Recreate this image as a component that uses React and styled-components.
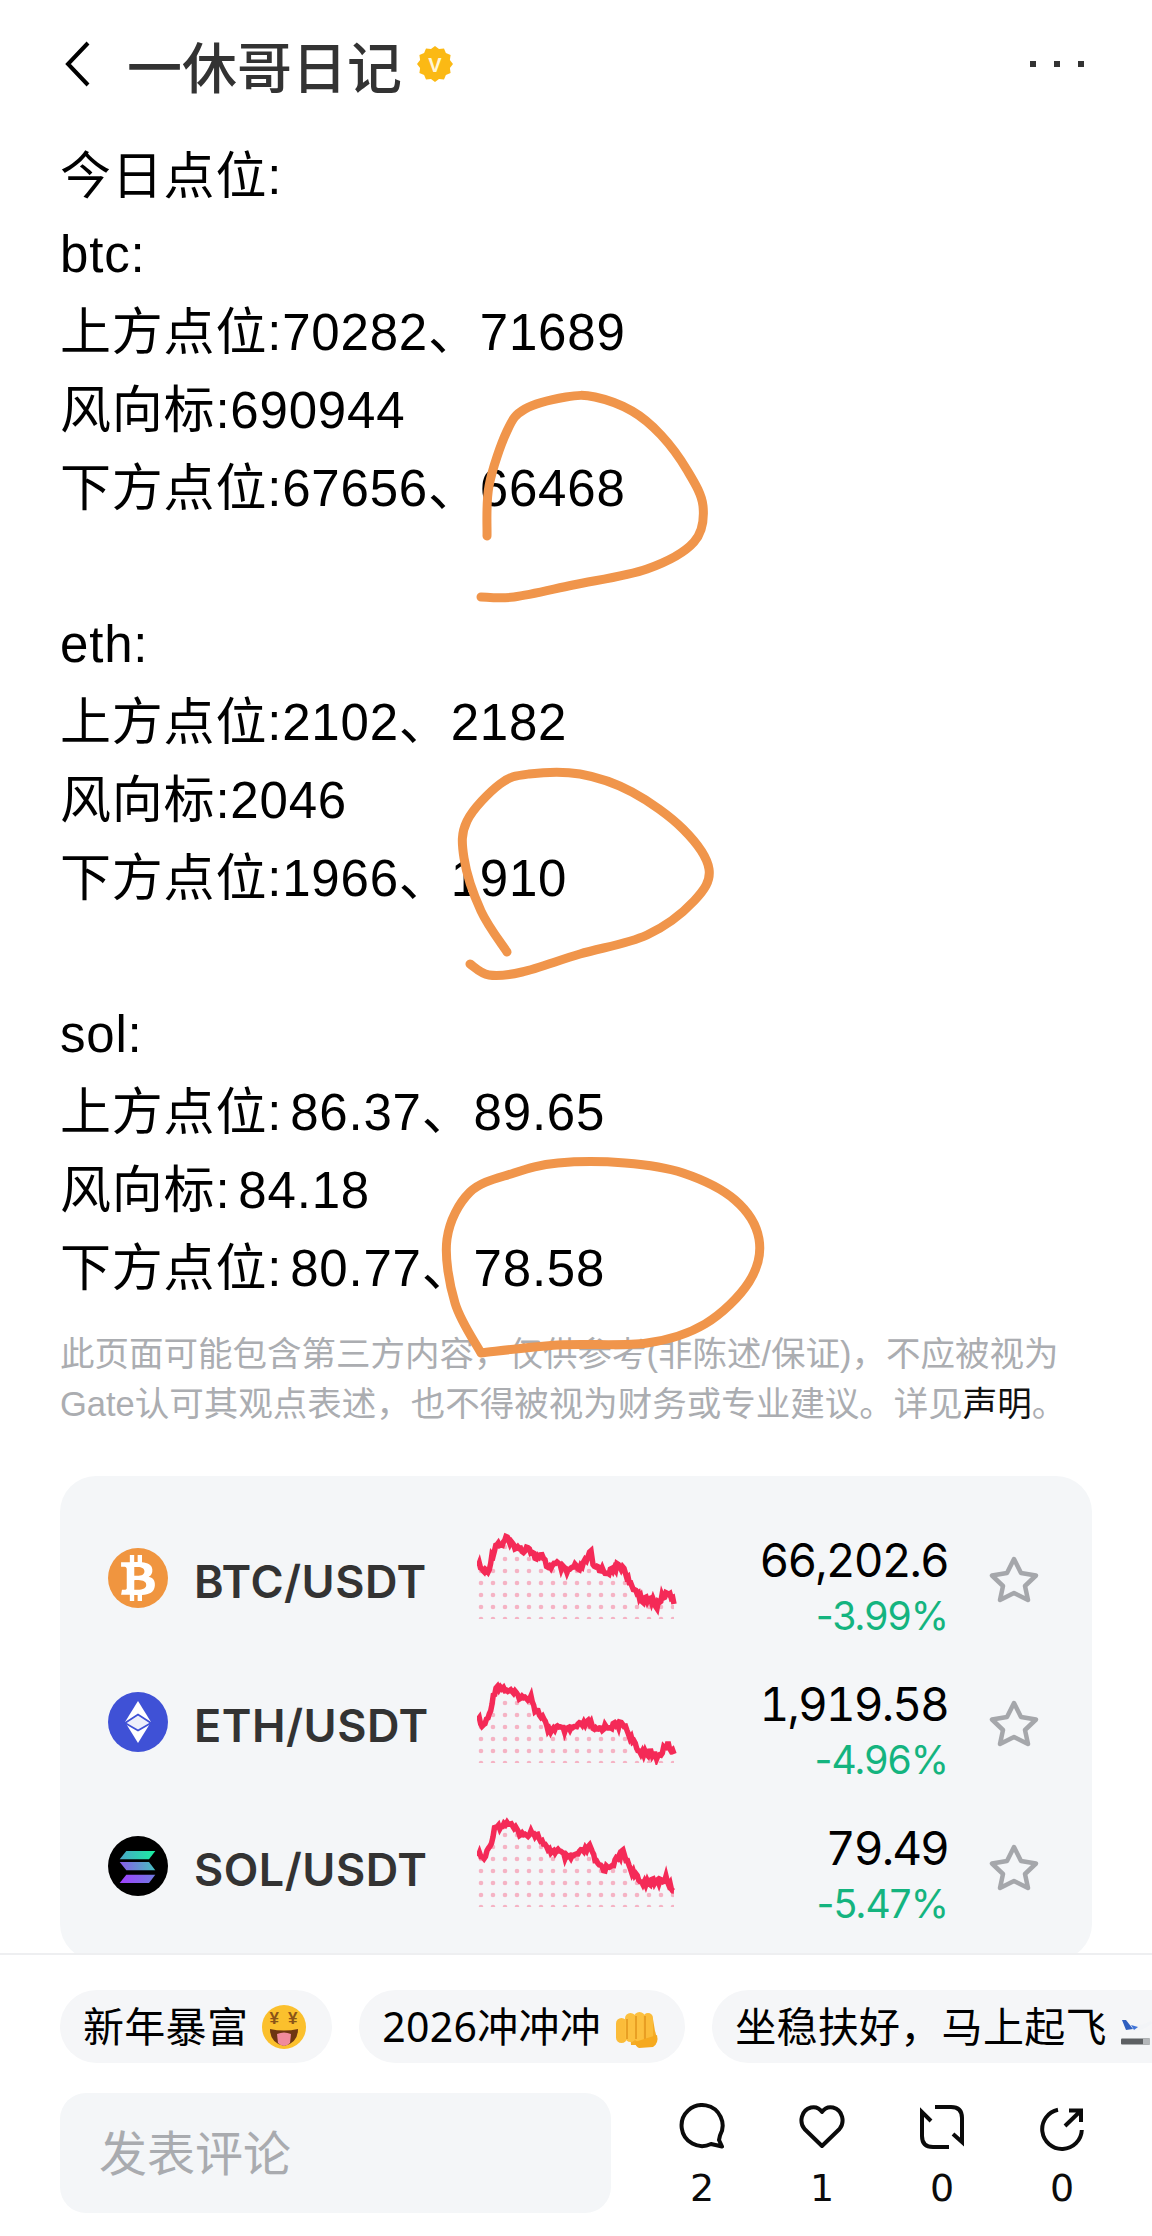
import React, { useId } from "react";
import styled, { createGlobalStyle } from "styled-components";
import { FaBtc } from "react-icons/fa";

const sans = `"Liberation Sans", "Noto Sans CJK SC", sans-serif`;

const GlobalStyle = createGlobalStyle`
	html, body {
		margin: 0;
		padding: 0;
		background: #fff;
	}
	* {
		box-sizing: border-box;
	}
`;

const Page = styled.div`
	position: relative;
	display: flex;
	flex-direction: column;
	width: 1152px;
	height: 2236px;
	overflow: hidden;
	font-family: ${sans};
	color: #000;
`;

const Content = styled.main`
	flex: 1;
	min-height: 0;
	overflow: hidden;
`;

const Header = styled.header`
	display: flex;
	align-items: center;
	height: 128px;
	padding: 0 68px 0 64px;
`;

const BackIcon = styled.svg`
	width: 28px;
	height: 46px;
	margin-right: 35px;
`;

const Title = styled.h1`
	margin: 0 15px 0 0;
	font-family: "Noto Sans CJK SC", sans-serif;
	font-size: 55px;
	font-weight: 500;
	line-height: 1;
	color: #333;
`;

const Badge = styled.svg`
	width: 36px;
	height: 36px;
`;

const MoreButton = styled.div`
	display: flex;
	gap: 18px;
	margin-left: auto;
`;

const MoreDot = styled.span`
	width: 6px;
	height: 6px;
	background: #333;
`;

const Article = styled.article`
	padding: 10px 60px 0;
	font-size: 51px;
	line-height: 78px;
	letter-spacing: 0.8px;
	word-spacing: -7px;
`;

const Line = styled.div`
	min-height: 78px;
	white-space: pre;
`;

const Disclaimer = styled.p`
	margin: 21px 0 0;
	padding: 0 60px 0 60px;
	font-size: 34.5px;
	line-height: 50px;
	color: #abadb1;
`;

const DisclaimerLink = styled.span`
	color: #111;
`;

const Card = styled.section`
	margin: 47px 60px 0;
	height: 484px;
	padding: 30px 0 0 48px;
	border-radius: 36px;
	background: #f4f6f8;
`;

const Row = styled.div`
	display: grid;
	grid-template-columns: 86px 283px 200px 271px 91px;
	align-items: center;
	height: 144px;
`;

const CoinCircle = styled.div`
	display: flex;
	align-items: center;
	justify-content: center;
	width: 60px;
	height: 60px;
	border-radius: 50%;
	background: ${(p) => p.$bg};
	color: #fff;
	font-size: 46px;
`;

const Pair = styled.div`
	padding-top: 6px;
	font-family: Inter, sans-serif;
	font-size: 45px;
	font-weight: 600;
	letter-spacing: 0.5px;
	color: #333;
`;

const Spark = styled.svg`
	display: block;
	width: 200px;
	height: 92px;
	margin-top: -6px;
`;

const Quote = styled.div`
	display: flex;
	flex-direction: column;
	align-items: flex-end;
	padding-top: 20px;
	font-family: Inter, sans-serif;
`;

const Price = styled.div`
	font-size: 46px;
	line-height: 56px;
	font-feature-settings: "tnum";
	letter-spacing: -1.9px;
	color: #000;
`;

const Change = styled.div`
	font-size: 39px;
	line-height: 56px;
	letter-spacing: -1px;
	color: #14b47f;
`;

const StarIcon = styled.svg`
	justify-self: end;
	width: 50px;
	height: 50px;
	margin-top: 4px;
`;

const Footer = styled.footer`
	flex-shrink: 0;
	height: 283px;
	padding-top: 35px;
	border-top: 2px solid #eeeff1;
	background: #fff;
`;

const ChipRow = styled.div`
	display: flex;
	gap: 27px;
	padding-left: 60px;
	overflow: hidden;
`;

const Chip = styled.div`
	display: flex;
	flex-shrink: 0;
	align-items: center;
	gap: 14px;
	height: 73px;
	padding: 0 26px 0 23px;
	border-radius: 37px;
	background: #f5f6f8;
	font-size: 41px;
	letter-spacing: 0.3px;
	white-space: nowrap;
`;

const ChipText = styled.span`
	margin-top: -5px;
`;

const ChipDigits = styled.span`
	font-family: "Noto Sans", sans-serif;
`;

const Emoji = styled.svg`
	flex-shrink: 0;
	width: 44px;
	height: 44px;
`;

const ActionRow = styled.div`
	display: flex;
	margin-top: 30px;
	padding-left: 60px;
`;

const CommentInput = styled.div`
	display: flex;
	align-items: center;
	width: 551px;
	height: 120px;
	padding: 0 0 6px 39px;
	border-radius: 26px;
	background: #f4f6f8;
	font-size: 48px;
	color: #a9abaf;
`;

const Actions = styled.div`
	display: flex;
	margin-left: 31px;
	padding-top: 10px;
`;

const Action = styled.div`
	display: flex;
	flex-direction: column;
	align-items: center;
	width: 120px;
`;

const ActionIcon = styled.svg`
	width: 48px;
	height: 48px;
	fill: none;
	stroke: #0b0b0b;
	stroke-width: 4;
`;

const ActionCount = styled.div`
	margin-top: 15px;
	font-family: "DejaVu Sans", sans-serif;
	font-size: 38px;
	line-height: 44px;
	color: #0b0b0b;
`;

const Scribbles = styled.svg`
	position: absolute;
	top: 0;
	left: 0;
	width: 1152px;
	height: 2236px;
	fill: none;
	stroke: #f0954b;
	stroke-width: 9;
	stroke-linecap: round;
	stroke-linejoin: round;
	pointer-events: none;
`;

const lines = [
	"今日点位:",
	"btc:",
	"上方点位:70282、71689",
	"风向标:690944",
	"下方点位:67656、66468",
	"",
	"eth:",
	"上方点位:2102、2182",
	"风向标:2046",
	"下方点位:1966、1910",
	"",
	"sol:",
	"上方点位: 86.37、89.65",
	"风向标: 84.18",
	"下方点位: 80.77、78.58",
];

const circles = [
	[
		[487, 536], [489, 486], [507, 431], [525, 409], [566, 397], [595, 397], [632, 411], [661, 435],
		[687, 470], [703, 506], [694, 542], [647, 569], [573, 585], [514, 597], [481, 597],
	],
	[
		[507, 952], [481, 911], [464, 858], [467, 821], [500, 784], [529, 774], [580, 774], [632, 792],
		[683, 829], [709, 869], [694, 901], [647, 935], [580, 954], [522, 972], [489, 975], [470, 964],
	],
	[
		[481, 1353], [455, 1303], [447, 1239], [470, 1192], [514, 1173], [558, 1163], [625, 1163], [683, 1173],
		[735, 1200], [759, 1239], [749, 1282], [705, 1324], [647, 1343], [558, 1345], [481, 1353],
	],
];

const coins = [
	{
		pair: "BTC/USDT",
		price: "66,202.6",
		change: "-3.99%",
		bg: "#f0953f",
		spark: [
			[1, 35], [6, 42], [11, 43], [15, 27], [20, 13], [24, 17], [29, 8], [33, 15], [38, 17], [45, 22], [51, 17],
			[58, 28], [65, 28], [71, 38], [80, 35], [90, 43], [98, 37], [101, 42], [108, 33], [114, 23], [116, 38],
			[121, 38], [128, 43], [136, 42], [140, 37], [147, 39], [155, 60], [160, 62], [165, 71], [176, 71],
			[180, 78], [185, 68], [193, 63], [197, 75],
		],
	},
	{
		pair: "ETH/USDT",
		price: "1,919.58",
		change: "-4.96%",
		bg: "#3f51d6",
		spark: [
			[1, 44], [5, 54], [11, 46], [19, 13], [28, 16], [38, 21], [48, 26], [54, 23], [58, 36], [67, 46], [71, 59],
			[79, 54], [89, 58], [101, 53], [114, 49], [116, 58], [128, 54], [147, 51], [153, 63], [161, 78], [171, 80],
			[181, 84], [191, 71], [197, 81],
		],
	},
	{
		pair: "SOL/USDT",
		price: "79.49",
		change: "-5.47%",
		bg: "#000",
		spark: [
			[1, 37], [7, 42], [13, 29], [19, 7], [24, 10], [30, 5], [40, 14], [48, 19], [54, 14], [62, 20], [71, 34],
			[81, 34], [91, 42], [101, 37], [114, 30], [118, 45], [128, 52], [138, 45], [146, 35], [155, 54], [163, 65],
			[179, 65], [189, 62], [197, 74],
		],
	},
];

// catmull-rom through the points, so the hand drawn rings stay round
const smoothPath = (pts) => {
	let d = `M${pts[0][0]} ${pts[0][1]}`;
	for (let i = 0; i < pts.length - 1; i++) {
		const p0 = pts[i - 1] || pts[i];
		const p1 = pts[i];
		const p2 = pts[i + 1];
		const p3 = pts[i + 2] || p2;
		const c1x = p1[0] + (p2[0] - p0[0]) / 6;
		const c1y = p1[1] + (p2[1] - p0[1]) / 6;
		const c2x = p2[0] - (p3[0] - p1[0]) / 6;
		const c2y = p2[1] - (p3[1] - p1[1]) / 6;
		d += ` C${c1x} ${c1y} ${c2x} ${c2y} ${p2[0]} ${p2[1]}`;
	}
	return d;
};

// adds fixed noise between the points so the line looks like tick data
const jitter = (pts) => {
	const out = [];
	let n = 0;
	pts.slice(0, -1).forEach((p, i) => {
		const q = pts[i + 1];
		const steps = Math.max(1, Math.round((q[0] - p[0]) / 1.4));
		for (let s = 0; s < steps; s++) {
			const t = s / steps;
			const r = Math.sin(++n * 12.9898) * 43758.5453;
			const noise = (r - Math.floor(r) - 0.5) * 6;
			out.push([p[0] + (q[0] - p[0]) * t, p[1] + (q[1] - p[1]) * t + noise]);
		}
	});
	out.push(pts[pts.length - 1]);
	return out;
};

const toPoints = (pts) => pts.map((p) => `${p[0].toFixed(1)},${p[1].toFixed(1)}`).join(" ");

const Sparkline = ({ points }) => {
	const id = useId();
	const noisy = jitter(points);
	const last = points[points.length - 1];
	const area = `${toPoints(points)} ${last[0]},92 ${points[0][0]},92`;
	return (
		<Spark viewBox="0 0 200 92">
			<defs>
				<pattern id={`${id}d`} x="-2" y="0" width="12" height="12" patternUnits="userSpaceOnUse">
					<circle cx="6" cy="6" r="2.3" fill="#f5b3c4" />
				</pattern>
				<clipPath id={`${id}c`}>
					<polygon points={area} />
				</clipPath>
			</defs>
			<rect width="200" height="90" fill={`url(#${id}d)`} clipPath={`url(#${id}c)`} />
			<polyline
				points={toPoints(noisy)}
				fill="none"
				stroke="#f42a57"
				strokeWidth="5.5"
				strokeLinejoin="miter"
			/>
		</Spark>
	);
};

const starBurst = (() => {
	const pts = [];
	for (let i = 0; i < 24; i++) {
		const r = i % 2 ? 15.4 : 18;
		const a = (i * Math.PI) / 12;
		pts.push(`${(18 + r * Math.sin(a)).toFixed(2)},${(18 - r * Math.cos(a)).toFixed(2)}`);
	}
	return pts.join(" ");
})();

const EthLogo = () => (
	<svg width="60" height="60" viewBox="0 0 60 60">
		<polygon points="30,9 43,30 30,51 17,30" fill="#fff" />
		<polygon points="17,31 30,22.5 43,31 30,38.5" fill="#eef0fb" stroke="#3f51d6" strokeWidth="1.8" />
	</svg>
);

const SolLogo = () => {
	const id = useId();
	return (
		<svg width="60" height="60" viewBox="0 0 60 60">
			<defs>
				<linearGradient id={`${id}a`} x1="0" y1="0" x2="1" y2="0">
					<stop offset="0" stopColor="#4aa5c8" />
					<stop offset="1" stopColor="#19f0a0" />
				</linearGradient>
				<linearGradient id={`${id}b`} x1="0" y1="0" x2="1" y2="0">
					<stop offset="0" stopColor="#8a5be8" />
					<stop offset="1" stopColor="#45c0c0" />
				</linearGradient>
				<linearGradient id={`${id}c`} x1="0" y1="0" x2="1" y2="0">
					<stop offset="0" stopColor="#a040ff" />
					<stop offset="1" stopColor="#6f7be0" />
				</linearGradient>
			</defs>
			<polygon points="18.3,15 47.3,15 41,23.3 11.7,23.3" fill={`url(#${id}a)`} />
			<polygon points="11.7,26 41,26 47.3,34.3 18.3,34.3" fill={`url(#${id}b)`} />
			<polygon points="18.3,38.7 47.3,38.7 41,47 11.7,47" fill={`url(#${id}c)`} />
		</svg>
	);
};

const coinLogos = {
	"BTC/USDT": <FaBtc />,
	"ETH/USDT": <EthLogo />,
	"SOL/USDT": <SolLogo />,
};

const MoneyFace = () => (
	<Emoji viewBox="0 0 44 44">
		<circle cx="22" cy="22" r="22" fill="#fbc02d" />
		<text x="12.5" y="19" fontSize="17" fontWeight="700" textAnchor="middle" fill="#8a5418" fontFamily="Liberation Sans">¥</text>
		<text x="31" y="19" fontSize="17" fontWeight="700" textAnchor="middle" fill="#8a5418" fontFamily="Liberation Sans">¥</text>
		<path d="M8 24 Q22 27 36 24 Q36 38 22 41 Q8 38 8 24Z" fill="#6d3512" />
		<path d="M15 29 Q22 26 29 29 L28 38 Q22 44 16 38Z" fill="#f08a9c" />
	</Emoji>
);

const Fist = () => (
	<Emoji viewBox="0 0 44 44">
		<path d="M16 40 L40 40 Q43 34 40 26 L38 14 L14 14 Z" fill="#f5ac26" />
		<rect x="1" y="13" width="11" height="25" rx="5.5" fill="#fbbc3a" />
		<rect x="10" y="8" width="11" height="29" rx="5.5" fill="#fcc03f" />
		<rect x="19" y="7" width="11" height="30" rx="5.5" fill="#fcc03f" />
		<rect x="28" y="8" width="10" height="30" rx="5" fill="#fbbc3a" />
		<path d="M12 14 V34 M21 11 V34 M30 11 V34" stroke="#e0921a" strokeWidth="1.4" fill="none" />
		<path d="M20 37 Q32 33 42 30 Q44 38 38 42 L24 43 Q20 41 20 37Z" fill="#f5a91f" />
	</Emoji>
);

const Plane = () => (
	<Emoji viewBox="0 0 44 44">
		<path d="M6 20 Q18 22 30 16 L31 18.5 Q24 25 12 26 Z" fill="#f2f4f7" />
		<path d="M1 15 L5 15 L12 24 L5 25 Z" fill="#2f5fc0" />
		<path d="M10 20 L17 22 L13 25 Z" fill="#3f74d8" />
		<rect x="0" y="33.5" width="29" height="6" rx="1" fill="#5d6063" />
		<rect x="22" y="33.5" width="7" height="6" fill="#b4b7ba" />
	</Emoji>
);

const App = () => (
	<Page>
		<GlobalStyle />
		<Content>
			<Header>
				<BackIcon viewBox="0 0 28 46">
					<path d="M24 2 L4 23 L24 44" fill="none" stroke="#000" strokeWidth="4" />
				</BackIcon>
				<Title>一休哥日记</Title>
				<Badge viewBox="0 0 36 36">
					<polygon points={starBurst} fill="#fbb914" />
					<text x="18" y="25.5" fontSize="20" fontWeight="700" textAnchor="middle" fill="#fff6d8" fontFamily="Liberation Sans">
						V
					</text>
				</Badge>
				<MoreButton>
					<MoreDot />
					<MoreDot />
					<MoreDot />
				</MoreButton>
			</Header>

			<Article>
				{lines.map((text, i) => (
					<Line key={i}>{text}</Line>
				))}
			</Article>

			<Disclaimer>
				此页面可能包含第三方内容，仅供参考(非陈述/保证)，不应被视为Gate认可其观点表述，也不得被视为财务或专业建议。详见
				<DisclaimerLink>声明</DisclaimerLink>。
			</Disclaimer>

			<Card>
				{coins.map((coin) => (
					<Row key={coin.pair}>
						<CoinCircle $bg={coin.bg}>{coinLogos[coin.pair]}</CoinCircle>
						<Pair>{coin.pair}</Pair>
						<Sparkline points={coin.spark} />
						<Quote>
							<Price>{coin.price}</Price>
							<Change>{coin.change}</Change>
						</Quote>
						<StarIcon viewBox="0 0 50 50">
							<polygon
								points="25,4 32,18 47,20.5 36,31 39,45 25,38 11,45 14,31 3,20.5 18,18"
								fill="none"
								stroke="#a5a7ab"
								strokeWidth="4.5"
								strokeLinejoin="round"
							/>
						</StarIcon>
					</Row>
				))}
			</Card>
		</Content>

		<Footer>
			<ChipRow>
				<Chip>
					<ChipText>新年暴富</ChipText>
					<MoneyFace />
				</Chip>
				<Chip>
					<ChipText>
						<ChipDigits>2026</ChipDigits>冲冲冲
					</ChipText>
					<Fist />
				</Chip>
				<Chip>
					<ChipText>坐稳扶好，马上起飞</ChipText>
					<Plane />
				</Chip>
			</ChipRow>
			<ActionRow>
				<CommentInput>发表评论</CommentInput>
				<Actions>
					<Action>
						<ActionIcon viewBox="0 0 48 48">
							<path d="M33 41 A20.5 20.5 0 1 1 42 32.5 L41 37 L44 43.5 L37.5 42 Z" strokeLinejoin="round" />
						</ActionIcon>
						<ActionCount>2</ActionCount>
					</Action>
					<Action>
						<ActionIcon viewBox="0 0 48 48">
							<path d="M24 43 L6.5 26 C1 19.5 3 7 13 4.5 C18 3.5 22 6 24 9 C26 6 30 3.5 35 4.5 C45 7 47 19.5 41.5 26 Z" strokeLinejoin="round" />
						</ActionIcon>
						<ActionCount>1</ActionCount>
					</Action>
					<Action>
						<ActionIcon viewBox="0 0 48 48">
							<path d="M17 4 H33 Q44 4 44 15 V39 L35 31" />
							<path d="M31 44 H15 Q4 44 4 33 V9 L13 18" />
						</ActionIcon>
						<ActionCount>0</ActionCount>
					</Action>
					<Action>
						<ActionIcon viewBox="0 0 48 48">
							<path d="M20 6.8 A19.8 19.8 0 1 0 43.8 27" />
							<path d="M27 23 L43 7.5 M31 7.5 H43 V19" />
						</ActionIcon>
						<ActionCount>0</ActionCount>
					</Action>
				</Actions>
			</ActionRow>
		</Footer>

		<Scribbles viewBox="0 0 1152 2236">
			{circles.map((pts, i) => (
				<path key={i} d={smoothPath(pts)} />
			))}
		</Scribbles>
	</Page>
);

export default App;
